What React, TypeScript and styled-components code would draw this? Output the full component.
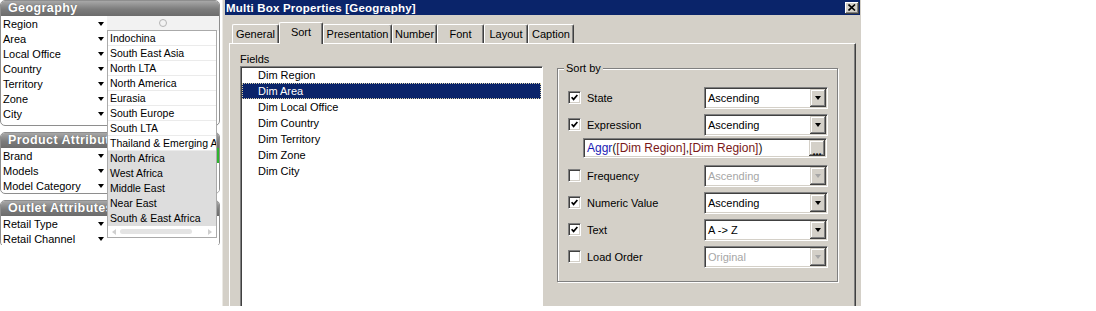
import React from 'react';
import styled, { createGlobalStyle } from 'styled-components';

const GlobalStyle = createGlobalStyle`
  html, body {
    margin: 0;
    padding: 0;
    background: #fff;
  }
  body {
    font-family: "Liberation Sans", Arial, sans-serif;
    font-size: 11px;
    color: #000;
  }
`;

const Page = styled.div`
  display: flex;
  align-items: flex-start;
  width: 1096px;
  height: 311px;
  overflow: hidden;
  background: #fff;
`;

/* ---------- left: multibox sheet objects ---------- */

const LeftPanel = styled.div`
  position: relative;
  flex-shrink: 0;
  width: 222px;
  height: 245px;
  overflow: hidden;
`;

const Box = styled.div<{ $pad: number; $mb: number }>`
  width: 220px;
  box-sizing: border-box;
  border: 1px solid #8e8e8e;
  border-radius: 5px;
  overflow: hidden;
  background: #fff;
  padding-bottom: ${(p) => p.$pad}px;
  margin-bottom: ${(p) => p.$mb}px;
`;

const BoxHeader = styled.div`
  height: 15px;
  line-height: 15px;
  padding-left: 7px;
  background: linear-gradient(#a8a8a8, #7c7c7c 55%, #6c6c6c);
  color: #fff;
  font-weight: bold;
  font-size: 12.5px;
  letter-spacing: 0.4px;
  text-shadow: 0 0 1px #555;
`;

const HeaderTitle = styled.span`
  display: block;
  width: 99px;
  white-space: nowrap;
  overflow: hidden;
`;

const FieldRow = styled.div`
  display: grid;
  grid-template-columns: 106px 1fr;
  height: 15px;
`;

const FieldLabel = styled.div`
  display: flex;
  align-items: center;
  justify-content: space-between;
  padding: 0 3px 0 2px;
  white-space: nowrap;
`;

const DownArrow = styled.span`
  width: 0;
  height: 0;
  border-left: 3px solid transparent;
  border-right: 3px solid transparent;
  border-top: 4px solid #000;
`;

const FieldValue = styled.div<{ $bg: string }>`
  display: flex;
  align-items: center;
  justify-content: center;
  background: ${(p) => p.$bg};
`;

const Ring = styled.span`
  width: 6px;
  height: 6px;
  border: 1px solid #b4b4b4;
  border-radius: 50%;
  margin-top: -2px;
`;

const DropList = styled.div`
  position: absolute;
  left: 107px;
  top: 30px;
  width: 110px;
  box-sizing: border-box;
  border: 1px solid #aaaaaa;
  background: #fff;
`;

const DropItem = styled.div<{ $excluded?: boolean }>`
  height: 15px;
  line-height: 15px;
  padding-left: 2px;
  font-size: 10.5px;
  white-space: nowrap;
  overflow: hidden;
  background: ${(p) => (p.$excluded ? '#dddddd' : '#fff')};
  box-shadow: inset 0 -1px 0 ${(p) => (p.$excluded ? '#dddddd' : '#ebebeb')};
`;

const HScroll = styled.div`
  height: 11px;
  display: flex;
  align-items: center;
  padding: 0 4px;
  gap: 4px;
`;

const ScrollArrow = styled.span<{ $dir: 'left' | 'right' }>`
  width: 0;
  height: 0;
  border-top: 3px solid transparent;
  border-bottom: 3px solid transparent;
  ${(p) =>
    p.$dir === 'left'
      ? 'border-right: 4px solid #cfcfcf;'
      : 'border-left: 4px solid #cfcfcf;'}
`;

const ScrollThumb = styled.span`
  width: 72px;
  height: 5px;
  border-radius: 3px;
  background: #e4e4e4;
`;

const ScrollTrack = styled.span`
  flex: 1;
`;

/* ---------- right: properties dialog ---------- */

const Dialog = styled.div`
  flex-shrink: 0;
  width: 639px;
  height: 306px;
  box-sizing: border-box;
  border-left: 1px solid #ebe9e4;
  padding: 0 1px 0 2px;
  background: #d4d0c8;
  overflow: hidden;
  display: flex;
  flex-direction: column;
`;

const TitleBar = styled.div`
  height: 15px;
  flex-shrink: 0;
  display: flex;
  align-items: center;
  justify-content: space-between;
  padding-left: 1px;
  background: #0a246a;
  color: #fff;
  font-weight: bold;
  font-size: 11.5px;
  letter-spacing: 0.2px;
`;

const CloseButton = styled.span`
  width: 14px;
  height: 12px;
  margin-right: 1px;
  display: flex;
  align-items: center;
  justify-content: center;
  background: #d4d0c8;
  box-shadow: inset -1px -1px 0 #404040, inset 1px 1px 0 #fff,
    inset -2px -2px 0 #808080;
`;

const Body = styled.div`
  flex: 1;
  display: flex;
  flex-direction: column;
  padding: 7px 4px 0 4px;
`;

const TabRow = styled.div`
  position: relative;
  z-index: 1;
  display: flex;
  align-items: flex-end;
  height: 22px;
  padding-left: 3px;
  margin-bottom: -1px;
`;

const Tab = styled.div<{ $w: number; $active?: boolean }>`
  width: ${(p) => p.$w}px;
  height: ${(p) => (p.$active ? 22 : 19)}px;
  margin-bottom: ${(p) => (p.$active ? 0 : 1)}px;
  padding-bottom: ${(p) => (p.$active ? 4 : 0)}px;
  box-sizing: border-box;
  display: flex;
  align-items: center;
  justify-content: center;
  background: #d4d0c8;
  border-top: 1px solid #fff;
  border-left: 1px solid #fff;
  border-right: 1px solid #404040;
  border-radius: 2px 2px 0 0;
  box-shadow: inset -1px 0 0 #808080;
  white-space: nowrap;
`;

const TabPanel = styled.div`
  flex: 1;
  display: flex;
  align-items: flex-start;
  padding: 9px 0 0 10px;
  border-top: 1px solid #fff;
  border-left: 1px solid #fff;
  border-right: 1px solid #404040;
  box-shadow: inset -1px 0 0 #808080;
`;

const FieldsColumn = styled.div`
  display: flex;
  flex-direction: column;
  width: 303px;
`;

const Caption = styled.div`
  height: 13px;
  line-height: 13px;
`;

const FieldList = styled.div`
  height: 260px;
  box-sizing: border-box;
  padding: 0 1px;
  background: #fff;
  border-top: 1px solid #808080;
  border-left: 1px solid #808080;
  border-right: 1px solid #fff;
  box-shadow: inset 1px 1px 0 #404040;
`;

const ListItem = styled.div<{ $selected?: boolean }>`
  height: 16px;
  line-height: 16px;
  padding-left: 16px;
  background: ${(p) => (p.$selected ? '#0a246a' : 'transparent')};
  color: ${(p) => (p.$selected ? '#fff' : '#000')};
  outline: ${(p) => (p.$selected ? '1px dotted #d8d0a8' : 'none')};
  outline-offset: -1px;
`;

const GroupBox = styled.div`
  margin: 15px 0 0 14px;
  width: 281px;
  box-sizing: border-box;
  padding: 0 9px 8px 10px;
  border: 1px solid #808080;
  box-shadow: 1px 1px 0 #fff, inset 1px 1px 0 #fff;
`;

const GroupTitle = styled.div`
  width: fit-content;
  margin: -7px 0 12px -4px;
  padding: 0 2px;
  line-height: 13px;
  background: #d4d0c8;
`;

const SortRow = styled.div<{ $mb: number }>`
  display: flex;
  align-items: center;
  justify-content: space-between;
  height: 22px;
  margin-bottom: ${(p) => p.$mb}px;
`;

const CheckLabel = styled.label`
  display: flex;
  align-items: center;
  gap: 6px;
  margin-top: -1px;
`;

const CheckBox = styled.span`
  width: 13px;
  height: 13px;
  box-sizing: border-box;
  display: flex;
  align-items: center;
  justify-content: center;
  background: #fff;
  border-top: 1px solid #808080;
  border-left: 1px solid #808080;
  border-right: 1px solid #fff;
  border-bottom: 1px solid #fff;
  box-shadow: inset 1px 1px 0 #404040, inset -1px -1px 0 #d4d0c8;
`;

const Sunken = styled.div<{ $w: number; $h: number }>`
  width: ${(p) => p.$w}px;
  height: ${(p) => p.$h}px;
  box-sizing: border-box;
  display: flex;
  align-items: stretch;
  padding: 1px;
  background: #fff;
  border-top: 1px solid #808080;
  border-left: 1px solid #808080;
  border-right: 1px solid #fff;
  border-bottom: 1px solid #fff;
  box-shadow: inset 1px 1px 0 #404040, inset -1px -1px 0 #d4d0c8;
`;

const ComboText = styled.span<{ $disabled?: boolean }>`
  flex: 1;
  display: flex;
  align-items: center;
  padding-left: 2px;
  color: ${(p) => (p.$disabled ? '#a6a6a6' : '#000')};
  white-space: nowrap;
  overflow: hidden;
`;

const RaisedButton = styled.span<{ $align?: string }>`
  width: 16px;
  flex-shrink: 0;
  display: flex;
  align-items: ${(p) => p.$align ?? 'center'};
  justify-content: center;
  background: #d4d0c8;
  box-shadow: inset -1px -1px 0 #404040, inset 1px 1px 0 #d4d0c8,
    inset -2px -2px 0 #808080, inset 2px 2px 0 #fff;
  line-height: 10px;
  font-weight: bold;
`;

const ButtonArrow = styled.span<{ $disabled?: boolean }>`
  width: 0;
  height: 0;
  border-left: 3.5px solid transparent;
  border-right: 3.5px solid transparent;
  border-top: 4px solid ${(p) => (p.$disabled ? '#a6a6a6' : '#000')};
  margin-right: 1px;
`;

const ExprBox = styled.div`
  margin: 0 0 7px 15px;
`;

const ExprText = styled.span`
  flex: 1;
  display: flex;
  align-items: center;
  padding-left: 2px;
  font-size: 12px;
  white-space: nowrap;
  color: #202020;
`;

const Fn = styled.span`
  color: #1b1bb4;
`;

const FieldRef = styled.span`
  color: #7a1818;
`;

type SortOption = {
  label: string;
  checked: boolean;
  value: string;
  disabled?: boolean;
};

const geography = ['Region', 'Area', 'Local Office', 'Country', 'Territory', 'Zone', 'City'];
const product = ['Brand', 'Models', 'Model Category'];
const outlet = ['Retail Type', 'Retail Channel'];

const regions = [
  'Indochina',
  'South East Asia',
  'North LTA',
  'North America',
  'Eurasia',
  'South Europe',
  'South LTA',
  'Thailand & Emerging A',
];
const excludedRegions = ['North Africa', 'West Africa', 'Middle East', 'Near East', 'South & East Africa'];

const tabs = [
  { name: 'General', w: 47 },
  { name: 'Sort', w: 44 },
  { name: 'Presentation', w: 69 },
  { name: 'Number', w: 45 },
  { name: 'Font', w: 47 },
  { name: 'Layout', w: 44 },
  { name: 'Caption', w: 46 },
];

const fields = [
  'Dim Region',
  'Dim Area',
  'Dim Local Office',
  'Dim Country',
  'Dim Territory',
  'Dim Zone',
  'Dim City',
];

const sortOptions: SortOption[] = [
  { label: 'State', checked: true, value: 'Ascending' },
  { label: 'Expression', checked: true, value: 'Ascending' },
  { label: 'Frequency', checked: false, value: 'Ascending', disabled: true },
  { label: 'Numeric Value', checked: true, value: 'Ascending' },
  { label: 'Text', checked: true, value: 'A -> Z' },
  { label: 'Load Order', checked: false, value: 'Original', disabled: true },
];

const Check = ({ checked }: { checked: boolean }) => (
  <CheckBox>
    {checked && (
      <svg width="7" height="7" viewBox="0 0 7 7">
        <path d="M0.6 3.2 L2.6 5.4 L6.4 1" fill="none" stroke="#000" strokeWidth="1.7" />
      </svg>
    )}
  </CheckBox>
);

const Combo = ({ value, disabled }: { value: string; disabled?: boolean }) => (
  <Sunken $w={124} $h={22}>
    <ComboText $disabled={disabled}>{value}</ComboText>
    <RaisedButton>
      <ButtonArrow $disabled={disabled} />
    </RaisedButton>
  </Sunken>
);

const MultiBox = ({
  title,
  items,
  pad,
  mb,
  values,
}: {
  title: string;
  items: string[];
  pad: number;
  mb: number;
  values?: Record<string, React.ReactNode>;
}) => (
  <Box $pad={pad} $mb={mb}>
    <BoxHeader>
      <HeaderTitle>{title}</HeaderTitle>
    </BoxHeader>
    {items.map((item) => (
      <FieldRow key={item}>
        <FieldLabel>
          {item}
          <DownArrow />
        </FieldLabel>
        <FieldValue $bg={item === 'Region' ? '#f2f2f2' : item === 'Brand' ? '#2fb52f' : '#fff'}>
          {values?.[item]}
        </FieldValue>
      </FieldRow>
    ))}
  </Box>
);

const App = () => (
  <>
    <GlobalStyle />
    <Page>
      <LeftPanel>
        <MultiBox title="Geography" items={geography} pad={4} mb={6} values={{ Region: <Ring /> }} />
        <MultiBox title="Product Attributes" items={product} pad={0} mb={6} />
        <MultiBox title="Outlet Attributes" items={outlet} pad={0} mb={0} />

        <DropList>
          {regions.map((r) => (
            <DropItem key={r}>{r}</DropItem>
          ))}
          {excludedRegions.map((r) => (
            <DropItem key={r} $excluded>
              {r}
            </DropItem>
          ))}
          <HScroll>
            <ScrollArrow $dir="left" />
            <ScrollThumb />
            <ScrollTrack />
            <ScrollArrow $dir="right" />
          </HScroll>
        </DropList>
      </LeftPanel>

      <Dialog>
        <TitleBar>
          Multi Box Properties [Geography]
          <CloseButton>
            <svg width="8" height="7" viewBox="0 0 8 7">
              <path d="M0.5 0.5 L7 6.5 M7 0.5 L0.5 6.5" stroke="#000" strokeWidth="1.6" />
            </svg>
          </CloseButton>
        </TitleBar>

        <Body>
          <TabRow>
            {tabs.map((t) => (
              <Tab key={t.name} $w={t.w} $active={t.name === 'Sort'}>
                {t.name}
              </Tab>
            ))}
          </TabRow>

          <TabPanel>
            <FieldsColumn>
              <Caption>Fields</Caption>
              <FieldList>
                {fields.map((f) => (
                  <ListItem key={f} $selected={f === 'Dim Area'}>
                    {f}
                  </ListItem>
                ))}
              </FieldList>
            </FieldsColumn>

            <GroupBox>
              <GroupTitle>Sort by</GroupTitle>
              {sortOptions.map((o) => (
                <React.Fragment key={o.label}>
                  <SortRow $mb={o.label === 'Expression' ? 2 : 5}>
                    <CheckLabel>
                      <Check checked={o.checked} />
                      {o.label}
                    </CheckLabel>
                    <Combo value={o.value} disabled={o.disabled} />
                  </SortRow>
                  {o.label === 'Expression' && (
                    <ExprBox>
                      <Sunken $w={244} $h={20}>
                        <ExprText>
                          <Fn>Aggr</Fn>(<FieldRef>[Dim Region]</FieldRef>,<FieldRef>[Dim Region]</FieldRef>)
                        </ExprText>
                        <RaisedButton $align="flex-end">...</RaisedButton>
                      </Sunken>
                    </ExprBox>
                  )}
                </React.Fragment>
              ))}
            </GroupBox>
          </TabPanel>
        </Body>
      </Dialog>
    </Page>
  </>
);

export default App;
